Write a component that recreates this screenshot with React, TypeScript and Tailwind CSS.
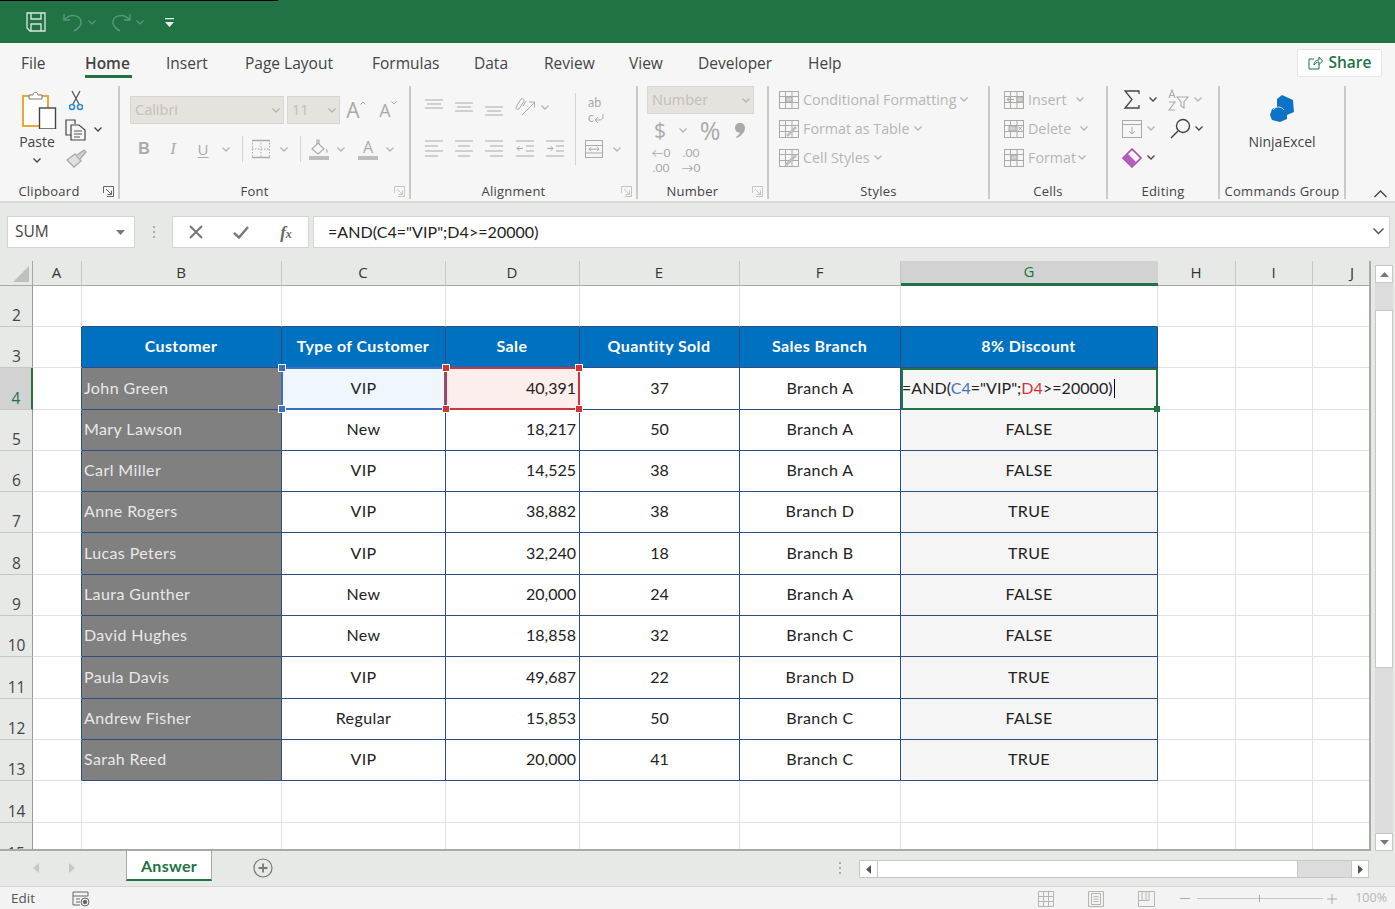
import type { ReactNode } from "react";

const ui = "font-['Open_Sans',sans-serif]";
const sheet = "font-['Lato',sans-serif]";

function Ico({ w = 20, h = 20, vb = "0 0 20 20", className = "", children }: { w?: number; h?: number; vb?: string; className?: string; children: ReactNode }) {
  return (
    <svg width={w} height={h} viewBox={vb} fill="none" stroke="currentColor" strokeWidth={1} className={className}>
      {children}
    </svg>
  );
}

function Slot({ w, children }: { w: string; children?: ReactNode }) {
  return <div className={`${w} flex h-full shrink-0 items-center justify-center`}>{children}</div>;
}

function Chev({ dark }: { dark?: boolean }) {
  return (
    <svg width="8" height="5" viewBox="0 0 8 5" fill="none" stroke={dark ? "#444" : "#b4b6b2"} strokeWidth="1.3">
      <path d="M0.5 0.5 4 4 7.5 0.5" />
    </svg>
  );
}

function Launcher({ dark }: { dark?: boolean }) {
  return (
    <svg width="11" height="11" viewBox="0 0 11 11" fill="none" stroke={dark ? "#666" : "#c3c5c1"} strokeWidth="1">
      <path d="M0.5 7V0.5H10.5V10.5H4M3 3 8.5 8.5M8.5 4.5V8.5H4.5" />
    </svg>
  );
}

function Sep({ className = "" }: { className?: string }) {
  return <div className={`w-px shrink-0 bg-[#d3d4d0] ${className}`} />;
}

function Group({ w, label, launcher, dark, children }: { w: string; label: string; launcher?: boolean; dark?: boolean; children: ReactNode }) {
  return (
    <div className={`${w} flex h-full shrink-0 flex-col border-r-2 border-[#c9cac6]`}>
      <div className="h-[98px] overflow-hidden">{children}</div>
      <div className="flex h-[15px] items-center">
        <div className="flex-1 text-center text-[13px] leading-none tracking-[0.25px] text-[#444]">{label}</div>
        {launcher && (
          <div className="flex w-[20px] justify-center">
            <Launcher dark={dark} />
          </div>
        )}
      </div>
    </div>
  );
}

function AlignLines({ y, x }: { y: number[]; x: [number, number][] }) {
  return (
    <Ico w={20} h={20} className="text-[#a9aba7]">
      {y.map((v, i) => (
        <path key={i} d={`M${x[i][0]} ${v}H${x[i][1]}`} />
      ))}
    </Ico>
  );
}

function DropBox({ w, text }: { w: string; text: string }) {
  return (
    <div className={`${w} flex h-[28px] items-center justify-between border border-[#d9d6d2] bg-[#e6e2de] pl-[4px] pr-[3px] text-[14.5px] text-[#c2bfbb]`}>
      <span>{text}</span>
      <Chev />
    </div>
  );
}

function StyleRow({ icon, text }: { icon: ReactNode; text: string }) {
  return (
    <div className="flex h-[29px] items-center">
      <Slot w="w-[22px]">{icon}</Slot>
      <span className="ml-[3px] text-[14.3px] text-[#b4b6b2]">{text}</span>
      <span className="ml-[4px]">
        <Chev />
      </span>
    </div>
  );
}

function CellsRow({ icon, text, w }: { icon: ReactNode; text: string; w: string }) {
  return (
    <div className="flex h-[29px] items-center">
      <Slot w="w-[22px]">{icon}</Slot>
      <span className={`ml-[3px] ${w} text-[14.3px] text-[#b4b6b2]`}>{text}</span>
      <Chev />
    </div>
  );
}

const gridIcon = (inner: ReactNode) => (
  <Ico className="text-[#a9aba7]">
    <rect x="0.5" y="1.5" width="19" height="17" />
    <path d="M0.5 6.5H19.5M0.5 12.5H19.5M6.5 1.5V18.5M13 1.5V18.5" />
    {inner}
  </Ico>
);

function Ribbon() {
  return (
    <div className={`${ui} flex h-[119px] shrink-0 border-b-2 border-[#d9dad6] bg-[#f6f6f6] pt-[2px] pb-[2px]`}>
      <Group w="w-[120px]" label="Clipboard" launcher dark>
        <div className="flex">
          <div className="ml-[12px] flex w-[50px] flex-col items-center pt-[5px]">
            <svg className="ml-[6px]" width="36" height="38" viewBox="0 0 36 38" fill="none">
              <rect x="1" y="5" width="25" height="30" fill="#fff" stroke="#eaa63a" strokeWidth="2" />
              <path d="M7 8V4H11C11 0.5 16 0.5 16 4H20V8Z" fill="#fff" stroke="#777" strokeWidth="1" />
              <rect x="17.5" y="17" width="16" height="21" fill="#fff" stroke="#444" strokeWidth="1.4" />
            </svg>
            <div className="mt-[3px] h-[20px] text-[14px] leading-[20px] text-[#444]">Paste</div>
            <div className="mt-[6px] leading-none">
              <Chev dark />
            </div>
          </div>
          <div className="flex flex-col">
            <div className="flex h-[29px]">
              <Slot w="w-[28px]">
                <svg width="14" height="22" viewBox="0 0 14 22" fill="none">
                  <path d="M3 1 10 14M11 1 4 14" stroke="#555" strokeWidth="1.3" />
                  <circle cx="3" cy="17" r="2.5" stroke="#2e8bd6" strokeWidth="1.6" />
                  <circle cx="11" cy="17" r="2.5" stroke="#2e8bd6" strokeWidth="1.6" />
                </svg>
              </Slot>
            </div>
            <div className="flex h-[29px]">
              <Slot w="w-[28px]">
                <svg width="22" height="22" viewBox="0 0 22 22" fill="none" stroke="#444" strokeWidth="1.2">
                  <path d="M6 16H1V1H10V5" />
                  <path d="M6 6H14L20 11V21H6Z" fill="#f6f6f6" />
                  <path d="M9 12H17M9 15H17M9 18H15" strokeWidth="0.9" />
                </svg>
              </Slot>
              <Slot w="w-[16px]">
                <Chev dark />
              </Slot>
            </div>
            <div className="flex h-[29px]">
              <Slot w="w-[28px]">
                <svg width="21" height="19" viewBox="0 0 21 19" fill="none" stroke="#a9aba7" strokeWidth="1.3">
                  <path d="M1 11 9 5 15 12 8 18Z" fill="#e0e1dd" />
                  <path d="M11 6 18 1 20 3 14 10" fill="#cfd0cc" />
                </svg>
              </Slot>
            </div>
          </div>
        </div>
      </Group>

      <Group w="w-[291px]" label="Font" launcher>
        <div className="pl-[10px] pt-[10px]">
          <div className="flex h-[28px] items-stretch">
            <DropBox w="w-[154px]" text="Calibri" />
            <div className="ml-[3px]">
              <DropBox w="w-[53px]" text="11" />
            </div>
            <Slot w="w-[32px]">
              <div className="flex items-start text-[#a9aba7]">
                <span className="text-[21px] leading-[24px]">A</span>
                <svg className="mt-[3px]" width="6" height="4" viewBox="0 0 6 4" fill="none" stroke="#a9aba7">
                  <path d="M0.5 3.5 3 1 5.5 3.5" />
                </svg>
              </div>
            </Slot>
            <Slot w="w-[32px]">
              <div className="flex items-start text-[#a9aba7]">
                <span className="text-[18px] leading-[24px]">A</span>
                <svg className="mt-[3px]" width="6" height="4" viewBox="0 0 6 4" fill="none" stroke="#a9aba7">
                  <path d="M0.5 0.5 3 3 5.5 0.5" />
                </svg>
              </div>
            </Slot>
          </div>
          <div className="mt-[11px] flex h-[28px] items-center text-[#a9aba7]">
            <Slot w="w-[28px]">
              <span className="font-['Liberation_Sans',sans-serif] text-[16px] font-bold">B</span>
            </Slot>
            <Slot w="w-[30px]">
              <span className="font-['Liberation_Serif',serif] text-[17px] italic">I</span>
            </Slot>
            <Slot w="w-[30px]">
              <span className="text-[15px] underline underline-offset-2">U</span>
            </Slot>
            <Slot w="w-[16px]">
              <Chev />
            </Slot>
            <Slot w="w-[16px]">
              <Sep className="h-[26px]" />
            </Slot>
            <Slot w="w-[22px]">
              <Ico>
                <path d="M1 1.5H19M1 18.5H19" strokeWidth="1.4" />
                <path d="M1.5 1V19M18.5 1V19M10 1V19M1 10H19" strokeDasharray="1.5 1.5" />
              </Ico>
            </Slot>
            <Slot w="w-[24px]">
              <Chev />
            </Slot>
            <Slot w="w-[8px]">
              <Sep className="h-[26px]" />
            </Slot>
            <Slot w="w-[30px]">
              <svg width="20" height="21" viewBox="0 0 20 21" fill="none" stroke="#a9aba7" strokeWidth="1.1">
                <path d="M3 10 9 4 15 10 9 15Z" />
                <path d="M8 5V1H10V5" />
                <path d="M17 10C18.5 12 18.5 13 17.5 13.5" />
                <rect x="0" y="17" width="20" height="4" fill="#bdbeb8" stroke="none" />
              </svg>
            </Slot>
            <Slot w="w-[14px]">
              <Chev />
            </Slot>
            <div className="w-[6px] shrink-0" />
            <Slot w="w-[28px]">
              <div className="flex flex-col items-center">
                <span className="text-[16px] leading-[18px]">A</span>
                <div className="h-[4px] w-[20px] bg-[#bdbeb8]" />
              </div>
            </Slot>
            <Slot w="w-[16px]">
              <Chev />
            </Slot>
          </div>
        </div>
      </Group>

      <Group w="w-[227px]" label="Alignment" launcher>
        <div className="flex pl-[8px]">
          <div className="w-[156px]">
            <div className="flex h-[42px] items-center">
              <Slot w="w-[30px]">
                <AlignLines y={[3, 7, 11]} x={[[1, 19], [3, 17], [1, 19]]} />
              </Slot>
              <Slot w="w-[30px]">
                <AlignLines y={[6, 10, 14]} x={[[1, 19], [3, 17], [1, 19]]} />
              </Slot>
              <Slot w="w-[30px]">
                <AlignLines y={[10, 14, 18]} x={[[1, 19], [3, 17], [1, 19]]} />
              </Slot>
              <Slot w="w-[31px]">
                <Ico className="text-[#a9aba7]">
                  <path d="M7 18 19 6M14 5H19.5V10.5" />
                  <path d="M1 10 6 2C8 0.5 10 3 8.5 5L4 12C2 13 0.5 11.5 1 10ZM8 9 11 4" />
                </Ico>
              </Slot>
              <Slot w="w-[10px]">
                <Chev />
              </Slot>
            </div>
            <div className="flex h-[42px] items-center">
              <Slot w="w-[30px]">
                <AlignLines y={[2, 7, 12, 17]} x={[[1, 19], [1, 14], [1, 19], [1, 14]]} />
              </Slot>
              <Slot w="w-[30px]">
                <AlignLines y={[2, 7, 12, 17]} x={[[1, 19], [4, 16], [1, 19], [4, 16]]} />
              </Slot>
              <Slot w="w-[30px]">
                <AlignLines y={[2, 7, 12, 17]} x={[[1, 19], [6, 19], [1, 19], [6, 19]]} />
              </Slot>
              <Slot w="w-[31px]">
                <Ico className="text-[#a9aba7]">
                  <path d="M1 2H19M11 7H19M11 12H19M1 17H19M8 9.5H2M4.5 7 2 9.5 4.5 12" />
                </Ico>
              </Slot>
              <Slot w="w-[30px]">
                <Ico className="text-[#a9aba7]">
                  <path d="M1 2H19M11 7H19M11 12H19M1 17H19M2 9.5H8M5.5 7 8 9.5 5.5 12" />
                </Ico>
              </Slot>
            </div>
          </div>
          <div className="mt-[7px] mb-[5px] w-px bg-[#d3d4d0]" />
          <div>
            <div className="flex h-[42px] items-center">
              <Slot w="w-[40px]">
                <div className={`${sheet} flex flex-col pt-[6px] text-[#a9aba7]`}>
                  <span className="text-[12.5px] leading-[15px]">ab</span>
                  <div className="flex items-center">
                    <span className="text-[12.5px] leading-[15px]">c</span>
                    <svg width="10" height="10" viewBox="0 0 10 10" fill="none" stroke="#a9aba7">
                      <path d="M9 1V4C9 6 7 7 5 7H1M4 4 1 7 4 10" />
                    </svg>
                  </div>
                </div>
              </Slot>
            </div>
            <div className="flex h-[42px] items-center">
              <Slot w="w-[36px]">
                <Ico className="text-[#a9aba7]">
                  <rect x="1.5" y="1.5" width="17" height="17" />
                  <path d="M1.5 6.5H18.5M1.5 14H18.5M5 10.2H15M7 8.2 5 10.2 7 12.2M13 8.2 15 10.2 13 12.2" />
                </Ico>
              </Slot>
              <Slot w="w-[10px]">
                <Chev />
              </Slot>
            </div>
          </div>
        </div>
      </Group>

      <Group w="w-[131px]" label="Number" launcher>
        <div className="pl-[9px]">
          <DropBox w="w-[107px]" text="Number" />
          <div className="mt-[2px] flex h-[28px] items-center text-[#a9aba7]">
            <Slot w="w-[26px]">
              <span className="text-[21px] leading-none">$</span>
            </Slot>
            <Slot w="w-[20px]">
              <Chev />
            </Slot>
            <Slot w="w-[34px]">
              <span className="text-[25px] leading-none">%</span>
            </Slot>
            <Slot w="w-[26px]">
              <svg width="10" height="15" viewBox="0 0 10 15" fill="#a9aba7">
                <path d="M5 0C8 0 10 2 10 5 10 9 6 13 2 15L1 14C3 12.500 4.500 11 5 9.500 2 10 0 8 0 5 0 2 2 0 5 0Z" />
              </svg>
            </Slot>
          </div>
          <div className={`${sheet} mt-[2px] flex h-[28px] items-center text-[12px] leading-[15px] text-[#a9aba7]`}>
            <Slot w="w-[28px]">
              <div className="text-center">
                <div>←0</div>
                <div>.00</div>
              </div>
            </Slot>
            <Slot w="w-[32px]">
              <div className="text-center">
                <div>.00</div>
                <div>→0</div>
              </div>
            </Slot>
          </div>
        </div>
      </Group>

      <Group w="w-[221px]" label="Styles">
        <div className="-mt-[1px] pl-[9px]">
          <StyleRow text="Conditional Formatting" icon={gridIcon(<path d="M7 7H13V12H7Z" fill="#d0d1cd" />)} />
          <StyleRow text="Format as Table" icon={gridIcon(<path d="M8 17 17 8" strokeWidth="2.5" stroke="#bdbeb8" />)} />
          <StyleRow text="Cell Styles" icon={gridIcon(<path d="M7 17 17 7" strokeWidth="3" stroke="#bdbeb8" />)} />
        </div>
      </Group>

      <Group w="w-[118px]" label="Cells">
        <div className="-mt-[1px] pl-[13px]">
          <CellsRow text="Insert" w="w-[48px]" icon={gridIcon(<path d="M13 7H19V12H13ZM10 9.500H3M5.500 7 3 9.500 5.500 12" fill="#d0d1cd" />)} />
          <CellsRow text="Delete" w="w-[52px]" icon={gridIcon(<path d="M5 7H12V12H5ZM14.500 7.500 18 11.500M18 7.500 14.500 11.500" fill="#d0d1cd" />)} />
          <CellsRow text="Format" w="w-[50px]" icon={gridIcon(<path d="M7 7H13V12H7Z" fill="#d0d1cd" />)} />
        </div>
      </Group>

      <Group w="w-[112px]" label="Editing">
        <div className="-mt-[1px] pl-[13px]">
          <div className="flex h-[29px] items-center">
            <Slot w="w-[22px]">
              <svg width="18" height="19" viewBox="0 0 18 19" fill="none" stroke="#444" strokeWidth="1.3">
                <path d="M16 4V1H2L9 9.5 2 18H16V15" />
              </svg>
            </Slot>
            <Slot w="w-[20px]">
              <Chev dark />
            </Slot>
            <div className="w-[3px]" />
            <Slot w="w-[24px]">
              <svg width="22" height="22" viewBox="0 0 22 22" fill="none" stroke="#a9aba7" strokeWidth="1.1">
                <path d="M2 9 5 1 8 9M3 6.5H7M2 13H8L2 21H8" />
                <path d="M10 8H21L17 13V19L14 17V13Z" />
              </svg>
            </Slot>
            <Slot w="w-[16px]">
              <Chev />
            </Slot>
          </div>
          <div className="flex h-[29px] items-center">
            <Slot w="w-[22px]">
              <svg width="20" height="18" viewBox="0 0 20 18" fill="none" stroke="#a9aba7" strokeWidth="1">
                <rect x="0.5" y="0.5" width="19" height="17" />
                <path d="M0.5 4.5H19.5M10 7V14M7 11 10 14 13 11" />
              </svg>
            </Slot>
            <Slot w="w-[16px]">
              <Chev />
            </Slot>
            <div className="w-[9px]" />
            <Slot w="w-[24px]">
              <svg width="21" height="21" viewBox="0 0 21 21" fill="none" stroke="#444" strokeWidth="1.4">
                <circle cx="13" cy="8" r="6.5" />
                <path d="M8 13 1 20" />
              </svg>
            </Slot>
            <Slot w="w-[14px]">
              <Chev dark />
            </Slot>
          </div>
          <div className="flex h-[29px] items-center">
            <Slot w="w-[22px]">
              <svg width="20" height="20" viewBox="0 0 20 20" fill="none">
                <path d="M1 10 10 1 19 10 10 19Z" fill="#f6f6f6" stroke="#a94cb8" strokeWidth="1.6" />
                <path d="M5.500 5.500 14.500 14.500 10 19 1 10Z" fill="#b45cc2" />
              </svg>
            </Slot>
            <Slot w="w-[16px]">
              <Chev dark />
            </Slot>
          </div>
        </div>
      </Group>

      <Group w="w-[126px]" label="Commands Group">
        <div className="flex flex-col items-center pt-[9px]">
          <svg width="25" height="27" viewBox="0 0 25 27">
            <path d="M12 0 23 5 24 17 17 20 17 24 10 27 2 25 0 20 2 14 7 12 7 4Z" fill="#0f72c9" />
            <path d="M3 15C6 11 11 11 14 15" fill="none" stroke="#cfe4f6" strokeWidth="0.9" />
          </svg>
          <div className="mt-[10px] h-[20px] text-[14px] leading-[20px] text-[#444]">NinjaExcel</div>
        </div>
      </Group>

      <div className="flex flex-1 items-end justify-end pb-[1px] pr-[8px]">
        <svg width="13" height="8" viewBox="0 0 13 8" fill="none" stroke="#444" strokeWidth="1.4">
          <path d="M0.5 7 6.5 1 12.5 7" />
        </svg>
      </div>
    </div>
  );
}

const tabs: [string, string][] = [
  ["File", "w-[64px]"],
  ["Home", "w-[81px]"],
  ["Insert", "w-[79px]"],
  ["Page Layout", "w-[127px]"],
  ["Formulas", "w-[102px]"],
  ["Data", "w-[70px]"],
  ["Review", "w-[85px]"],
  ["View", "w-[69px]"],
  ["Developer", "w-[110px]"],
  ["Help", "w-[60px]"],
];

function TitleBar() {
  return (
    <div className="h-[43px] shrink-0 bg-[#217346]">
      <div className="h-px w-[278px] bg-black" />
      <div className="flex h-[42px] items-center pl-[26px]">
        <svg width="20" height="20" viewBox="0 0 20 20" fill="none" stroke="#dbe8e0" strokeWidth="1.3">
          <path d="M1 1H19V19H4L1 16Z" />
          <path d="M5 1V7H15V1M5 19V12H15V19" />
        </svg>
        <svg className="ml-[17px]" width="20" height="20" viewBox="0 0 20 20" fill="none" stroke="#57987a" strokeWidth="1.5">
          <path d="M1 2V8H7M1.5 8C6 2 16 2 18 9 19 13 15 17 11 19" />
        </svg>
        <svg className="ml-[5px]" width="8" height="5" viewBox="0 0 8 5" fill="none" stroke="#57987a" strokeWidth="1.2">
          <path d="M0.5 0.5 4 4 7.5 0.5" />
        </svg>
        <svg className="ml-[15px]" width="20" height="20" viewBox="0 0 20 20" fill="none" stroke="#57987a" strokeWidth="1.5">
          <path d="M19 2V8H13M18.5 8C14 2 4 2 2 9 1 13 5 17 9 19" />
        </svg>
        <svg className="ml-[5px]" width="8" height="5" viewBox="0 0 8 5" fill="none" stroke="#57987a" strokeWidth="1.2">
          <path d="M0.5 0.5 4 4 7.500 0.5" />
        </svg>
        <svg className="ml-[21px]" width="9" height="9" viewBox="0 0 9 9" fill="#e8f0eb">
          <path d="M0 0H9V1.2H0ZM0 4H9L4.5 9Z" />
        </svg>
      </div>
    </div>
  );
}

function TabRow() {
  return (
    <div className={`${ui} flex h-[41px] shrink-0 items-center bg-[#f6f6f6] pb-[1px] pl-[21px]`}>
      {tabs.map(([t, w]) => (
        <div key={t} className={`${w} relative text-[15.5px] leading-[22px] text-[#444] ${t === "Home" ? "font-semibold" : ""}`}>
          {t}
          {t === "Home" && <div className="absolute left-0 top-[23px] h-[3px] w-[47px] bg-[#217346]" />}
        </div>
      ))}
      <div className="ml-auto mr-[13px] flex h-[28px] w-[85px] items-center justify-center gap-[6px] rounded-[2px] border border-[#e6e6e6] bg-white text-[15.5px] font-semibold text-[#217346]">
        <svg width="15" height="14" viewBox="0 0 15 14" fill="none" stroke="#217346" strokeWidth="1">
          <path d="M6 3H1V13H11V8M6 9C6 5 9 4 11 4V1L14.5 5 11 8.5V6C9 6 7 7 6 9Z" />
        </svg>
        Share
      </div>
    </div>
  );
}

function FormulaBar() {
  return (
    <div className={`${ui} flex h-[58px] shrink-0 items-center bg-[#e6e9e6] pl-[7px]`}>
      <div className="flex h-[32px] w-[128px] items-center justify-between border border-[#d2d5d1] bg-white pl-[7px] pr-[9px] text-[15.5px] text-[#444]">
        SUM
        <svg width="9" height="5" viewBox="0 0 9 5" fill="#777">
          <path d="M0 0H9L4.5 5Z" />
        </svg>
      </div>
      <div className="flex w-[37px] flex-col items-center gap-[3px]">
        <div className="h-[2px] w-[2px] bg-[#aaa]" />
        <div className="h-[2px] w-[2px] bg-[#aaa]" />
        <div className="h-[2px] w-[2px] bg-[#aaa]" />
      </div>
      <div className="flex h-[32px] w-[137px] items-center border border-[#d2d5d1] bg-white">
        <Slot w="w-[45px]">
          <svg width="14" height="14" viewBox="0 0 14 14" stroke="#777" strokeWidth="2">
            <path d="M1 1 13 13M13 1 1 13" />
          </svg>
        </Slot>
        <Slot w="w-[46px]">
          <svg width="16" height="13" viewBox="0 0 16 13" fill="none" stroke="#777" strokeWidth="2.4">
            <path d="M1 7 6 11.5 15 1" />
          </svg>
        </Slot>
        <Slot w="w-[44px]">
          <span className="font-['Liberation_Serif',serif] text-[17px] font-bold italic leading-none text-[#666]">
            f<span className="text-[12px]">x</span>
          </span>
        </Slot>
      </div>
      <div className={`ml-[4px] flex h-[32px] w-[1077px] items-center justify-between border border-[#d2d5d1] bg-white pb-[1px] pl-[14px] pr-[5px] ${sheet} text-[16px] tracking-[0.05px] text-[#222]`}>
        =AND(C4=&quot;VIP&quot;;D4&gt;=20000)
        <svg width="11" height="7" viewBox="0 0 11 7" fill="none" stroke="#555" strokeWidth="1.5">
          <path d="M0.5 0.5 5.5 5.5 10.5 0.5" />
        </svg>
      </div>
    </div>
  );
}

type Row = [string, string, string, string, string, string];

const rows: Row[] = [
  ["John Green", "VIP", "40,391", "37", "Branch A", ""],
  ["Mary Lawson", "New", "18,217", "50", "Branch A", "FALSE"],
  ["Carl Miller", "VIP", "14,525", "38", "Branch A", "FALSE"],
  ["Anne Rogers", "VIP", "38,882", "38", "Branch D", "TRUE"],
  ["Lucas Peters", "VIP", "32,240", "18", "Branch B", "TRUE"],
  ["Laura Gunther", "New", "20,000", "24", "Branch A", "FALSE"],
  ["David Hughes", "New", "18,858", "32", "Branch C", "FALSE"],
  ["Paula Davis", "VIP", "49,687", "22", "Branch D", "TRUE"],
  ["Andrew Fisher", "Regular", "15,853", "50", "Branch C", "FALSE"],
  ["Sarah Reed", "VIP", "20,000", "41", "Branch C", "TRUE"],
];

const headers = ["Customer", "Type of Customer", "Sale", "Quantity Sold", "Sales Branch", "8% Discount"];
const letters = ["A", "B", "C", "D", "E", "F", "G", "H", "I", "J"];

const plain = "border-r border-b border-[#e1e1e1]";
const boxed = "border-r border-b border-[#2f4d80] pb-[2px]";
const wide = "tracking-[0.4px]";

function RowNo({ n, active }: { n: number; active?: boolean }) {
  return (
    <div
      className={`flex items-end justify-center overflow-hidden border-b border-[#c6c8c4] pb-[1px] pl-[1px] ${ui} text-[15.5px] leading-[20px] ${
        active ? "border-r-[2px] border-r-[#217346] bg-[#d2d2d2] text-[#217346]" : "border-r border-r-[#9a9c98] bg-[#e6e9e6] text-[#444]"
      }`}
    >
      {n}
    </div>
  );
}

function Handle({ color, pos }: { color: string; pos: string }) {
  return <div className={`absolute z-20 h-[8px] w-[8px] border border-white ${color} ${pos}`} />;
}

function Blanks() {
  return (
    <>
      <div className={plain} />
      <div className={plain} />
      <div className={plain} />
    </>
  );
}

function Sheet() {
  return (
    <div className={`${sheet} grid h-[590px] w-[1371px] shrink-0 grid-cols-[33px_49px_200px_164px_134px_160px_161px_257px_78px_77px_58px] grid-rows-[25px_41px_41px_42px_41px_41px_41px_42px_41px_41px_42px_41px_41px_42px_29px] overflow-hidden border-r-2 border-b-2 border-[#a8aaa6] bg-white text-[16px] text-[#222]`}>
      <div className="flex items-end justify-end border-r border-b border-[#a8aaa6] bg-[#e6e9e6] p-[3px]">
        <svg width="16" height="16" viewBox="0 0 16 16">
          <path d="M16 0V16H0Z" fill="#bfc1bd" />
        </svg>
      </div>
      {letters.map((l) => (
        <div
          key={l}
          className={`flex items-center pb-[2px] ${ui} text-[15px] ${l === "J" ? "justify-end pr-[16px]" : "justify-center pr-[1px]"} ${
            l === "G"
              ? "border-b-[3px] border-b-[#217346] bg-[#d2d2d2] text-[#217346]"
              : "border-r border-b border-r-[#c6c8c4] border-b-[#a8aaa6] bg-[#e6e9e6] text-[#333]"
          }`}
        >
          {l}
        </div>
      ))}

      {/* row 2 */}
      <RowNo n={2} />
      <div className={plain} />
      {[0, 1, 2, 3, 4, 5].map((i) => (
        <div key={i} className="border-r border-b border-r-[#e1e1e1] border-b-[#2f4d80]" />
      ))}
      <Blanks />

      {/* row 3, header */}
      <RowNo n={3} />
      <div className="border-r border-b border-r-[#2f4d80] border-b-[#e1e1e1]" />
      {headers.map((h) => (
        <div key={h} className={`flex items-center justify-center bg-[#0070c0] pr-[1px] font-bold ${wide} text-white ${boxed}`}>
          {h}
        </div>
      ))}
      <Blanks />

      {rows.map((r, i) => {
        const first = i === 0;
        return (
          <div key={r[0]} className="contents">
            <RowNo n={i + 4} active={first} />
            <div className="border-r border-b border-r-[#2f4d80] border-b-[#e1e1e1]" />
            <div className={`flex items-center bg-[#808080] pl-[2px] ${wide} text-[#e8e8e8] ${boxed}`}>{r[0]}</div>
            <div className={`relative flex items-center justify-center ${wide} ${boxed} ${first ? "bg-[#eff6fd]" : ""}`}>
              {r[1]}
              {first && (
                <>
                  <div className="pointer-events-none absolute -inset-x-px -inset-y-px border-2 border-[#3a6fc4]" />
                  <Handle color="bg-[#3a6fc4]" pos="-left-[4px] -top-[4px]" />
                  <Handle color="bg-[#3a6fc4]" pos="-left-[4px] -bottom-[4px]" />
                </>
              )}
            </div>
            <div className={`relative flex items-center justify-end pr-[3px] ${boxed} ${first ? "bg-[#fdeeee]" : ""}`}>
              {r[2]}
              {first && (
                <>
                  <div className="pointer-events-none absolute -inset-x-px -inset-y-px border-2 border-[#d13438]" />
                  <Handle color="bg-[#d13438]" pos="-left-[4px] -top-[4px]" />
                  <Handle color="bg-[#d13438]" pos="-right-[4px] -top-[4px]" />
                  <Handle color="bg-[#d13438]" pos="-left-[4px] -bottom-[4px]" />
                  <Handle color="bg-[#d13438]" pos="-right-[4px] -bottom-[4px]" />
                </>
              )}
            </div>
            <div className={`flex items-center justify-center ${boxed}`}>{r[3]}</div>
            <div className={`flex items-center justify-center ${wide} ${boxed}`}>{r[4]}</div>
            {first ? (
              <div className="relative flex items-center border-2 border-[#217346] bg-[#f5f5f5] pb-[2px]">
                <span className="-ml-px tracking-[0.05px]">
                  =AND(<span className="text-[#4472c4]">C4</span>=&quot;VIP&quot;;<span className="text-[#d13438]">D4</span>&gt;=20000)
                </span>
                <div className="ml-px h-[19px] w-px bg-black" />
                <div className="absolute -bottom-[4px] -right-[4px] z-20 h-[6px] w-[6px] bg-[#217346]" />
              </div>
            ) : (
              <div className={`flex items-center justify-center bg-[#f5f5f5] ${wide} ${boxed}`}>{r[5]}</div>
            )}
            <Blanks />
          </div>
        );
      })}

      {/* rows 14, 15 */}
      <RowNo n={14} />
      {[0, 1, 2, 3, 4, 5, 6].map((i) => (
        <div key={i} className={plain} />
      ))}
      <Blanks />
      <div className={`flex items-start justify-center overflow-hidden border-r border-r-[#9a9c98] bg-[#e6e9e6] pt-[20px] ${ui} text-[15.5px] leading-[20px] text-[#444]`}>15</div>
      {letters.map((l) => (
        <div key={l} className="border-r border-[#e1e1e1]" />
      ))}
    </div>
  );
}

function ScrollBtn({ children, className = "" }: { children: ReactNode; className?: string }) {
  return <div className={`flex shrink-0 items-center justify-center border border-[#c6c8c4] bg-white ${className}`}>{children}</div>;
}

function VScroll() {
  return (
    <div className="flex h-[590px] flex-1 flex-col bg-[#e6e9e6] pl-[4px] pr-[2px] pt-[4px]">
      <ScrollBtn className="h-[18px] w-[18px]">
        <svg width="9" height="5" viewBox="0 0 9 5" fill="#777">
          <path d="M4.5 0 9 5H0Z" />
        </svg>
      </ScrollBtn>
      <div className="flex-1 bg-[#dcdcdc] pt-[27px]">
        <div className="h-[358px] border border-[#c6c8c4] bg-white" />
      </div>
      <ScrollBtn className="h-[18px] w-[18px]">
        <svg width="9" height="5" viewBox="0 0 9 5" fill="#777">
          <path d="M0 0H9L4.5 5Z" />
        </svg>
      </ScrollBtn>
    </div>
  );
}

function SheetTabs() {
  return (
    <div className={`${ui} flex h-[35px] shrink-0 items-start bg-[#e6e9e6]`}>
      <div className="flex h-[30px] w-[126px] items-center pl-[33px] pt-[4px]">
        <svg width="6" height="10" viewBox="0 0 6 10" fill="#c6c8c4">
          <path d="M6 0V10L0 5Z" />
        </svg>
        <svg className="ml-[30px]" width="6" height="10" viewBox="0 0 6 10" fill="#c6c8c4">
          <path d="M0 0V10L6 5Z" />
        </svg>
      </div>
      <div className={`${sheet} flex h-[30px] w-[86px] items-center justify-center border-x border-x-[#a8aaa6] border-b-2 border-b-[#217346] bg-white pt-[2px] text-[16px] font-bold tracking-[0.3px] text-[#217346]`}>
        Answer
      </div>
      <div className="ml-[41px] mt-[7px]">
        <svg width="20" height="20" viewBox="0 0 20 20" fill="none" stroke="#777" strokeWidth="1.2">
          <circle cx="10" cy="10" r="9" />
          <path d="M10 5.5V14.5M5.5 10H14.5" strokeWidth="1.8" />
        </svg>
      </div>
      <div className="ml-auto mr-[18px] mt-[11px] flex flex-col gap-[3px]">
        <div className="h-[2px] w-[2px] bg-[#aaa]" />
        <div className="h-[2px] w-[2px] bg-[#aaa]" />
        <div className="h-[2px] w-[2px] bg-[#aaa]" />
      </div>
      <div className="mr-[26px] mt-[9px] flex h-[18px] w-[510px] border border-[#c6c8c4] bg-[#dcdcdc]">
        <ScrollBtn className="w-[18px] border-y-0 border-l-0">
          <svg width="5" height="9" viewBox="0 0 5 9" fill="#555">
            <path d="M5 0V9L0 4.5Z" />
          </svg>
        </ScrollBtn>
        <div className="w-[420px] border-r border-[#c6c8c4] bg-white" />
        <div className="flex-1" />
        <ScrollBtn className="w-[17px] border-y-0 border-r-0">
          <svg width="5" height="9" viewBox="0 0 5 9" fill="#555">
            <path d="M0 0V9L5 4.5Z" />
          </svg>
        </ScrollBtn>
      </div>
    </div>
  );
}

function StatusBar() {
  return (
    <div className={`${ui} flex h-[24px] shrink-0 items-center border-t border-[#d5d6d2] bg-[#f3f3f3] pl-[11px] text-[#b4b6b2]`}>
      <span className="text-[13.5px] text-[#555]">Edit</span>
      <svg className="ml-[37px]" width="19" height="16" viewBox="0 0 19 16" fill="none" stroke="#666" strokeWidth="1">
        <path d="M1 1H16V5H1ZM1 5V14H8M4 8H8M4 11H8" />
        <circle cx="13" cy="11" r="4" />
        <circle cx="13" cy="11" r="1.8" fill="#666" />
      </svg>
      <svg className="ml-auto" width="16" height="16" viewBox="0 0 16 16" fill="none" stroke="currentColor">
        <path d="M0.5 0.5H15.5V15.5H0.5ZM0.5 5.5H15.5M0.5 10.5H15.5M5.5 0.5V15.5M10.5 0.5V15.5" />
      </svg>
      <svg className="ml-[34px]" width="16" height="16" viewBox="0 0 16 16" fill="none" stroke="currentColor">
        <path d="M0.5 0.5H15.5V15.5H0.5ZM3.5 2.5H12.5V13.5H3.5ZM5.5 5.5H10.5M5.5 8H10.5M5.5 10.5H10.5" />
      </svg>
      <svg className="ml-[34px]" width="17" height="16" viewBox="0 0 17 16" fill="none" stroke="currentColor">
        <path d="M0.5 0.5H16.5V15.5H0.5ZM0.5 9.5H8V0.5M4 0.5V9.5M8 9.5H11V0.5" />
      </svg>
      <div className="ml-[25px] h-px w-[10px] bg-[#a9aba7]" />
      <div className="relative ml-[7px] h-px w-[126px] bg-[#c6c8c4]">
        <div className="absolute left-[62px] -top-[3px] h-[7px] w-px bg-[#a9aba7]" />
      </div>
      <svg className="ml-[4px]" width="10" height="10" viewBox="0 0 10 10" stroke="#a9aba7">
        <path d="M0 5H10M5 0V10" />
      </svg>
      <span className="ml-[18px] mr-[8px] text-[12.5px]">100%</span>
    </div>
  );
}

export default function App() {
  return (
    <div className="flex h-[909px] w-[1395px] flex-col overflow-hidden bg-[#e6e9e6]">
      <TitleBar />
      <TabRow />
      <Ribbon />
      <FormulaBar />
      <div className="flex h-[590px] shrink-0">
        <Sheet />
        <VScroll />
      </div>
      <SheetTabs />
      <StatusBar />
    </div>
  );
}
